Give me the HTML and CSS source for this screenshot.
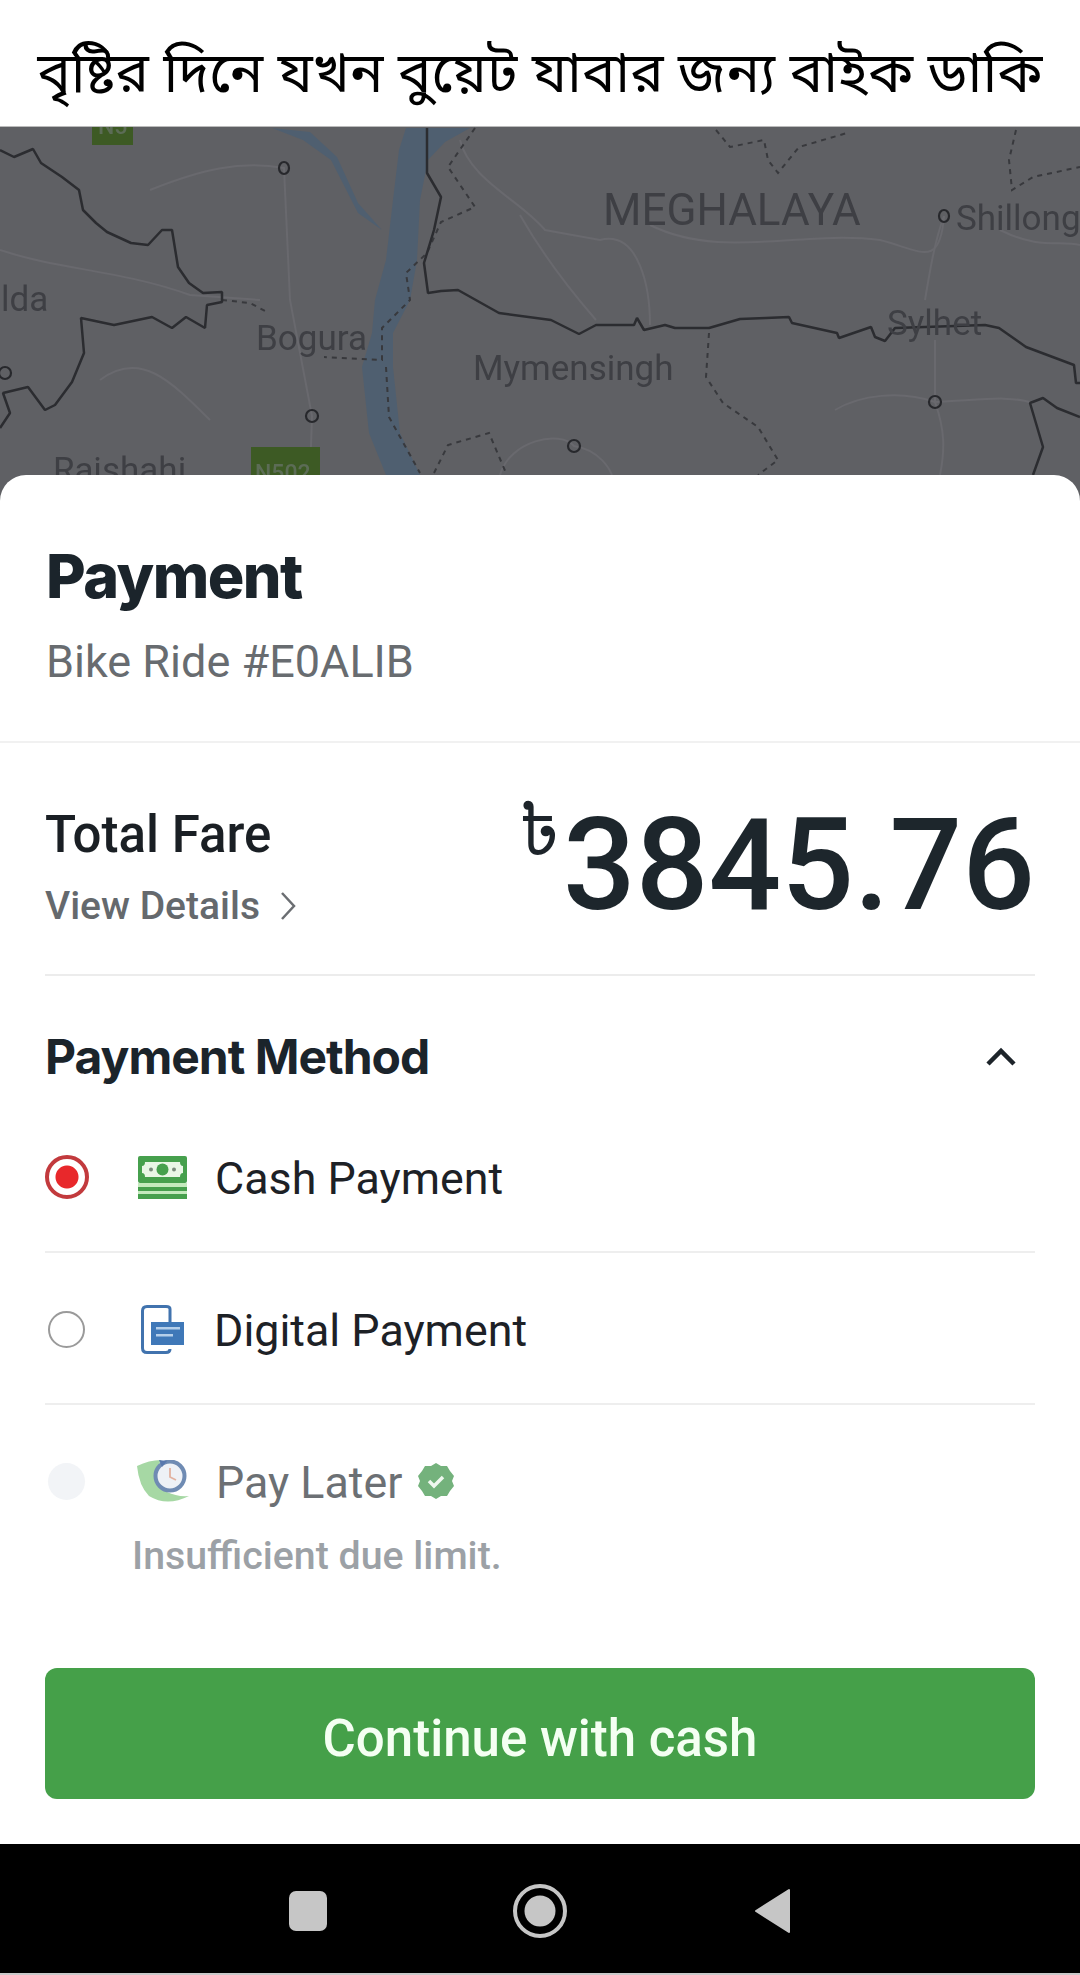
FILE: index.html
```html
<!DOCTYPE html>
<html lang="en">
<head>
<meta charset="utf-8">
<title>Payment</title>
<link rel="stylesheet" href="styles.css">
</head>
<body>
<div class="page">
  <header class="caption"><h1 class="caption-text" lang="bn">বৃষ্টির দিনে যখন বুয়েট যাবার জন্য বাইক ডাকি</h1></header>
  <div class="map-wrap">
    <svg class="map" viewBox="0 127 1080 348" width="1080" height="348" aria-label="Map">
      <rect x="0" y="127" width="1080" height="348" fill="#5f6064"/>
      <g class="roads">
        <path d="M150 190 C200 170 240 160 284 168 L290 300 L312 416 L310 475"/>
        <path d="M0 250 C60 270 120 270 190 295 L260 300"/>
        <path d="M460 140 C470 180 520 200 545 230 L600 240 C640 230 650 290 650 325"/>
        <path d="M520 215 C540 250 570 290 596 320"/>
        <path d="M650 225 C720 260 800 230 880 240 C920 250 940 270 944 216"/>
        <path d="M1000 230 C1040 250 1060 240 1080 245"/>
        <path d="M935 402 C900 390 860 395 835 410 M935 402 C945 430 945 450 940 475"/>
        <path d="M935 340 L935 402 M935 402 C980 400 1010 395 1033 403"/>
        <path d="M925 300 C930 270 935 240 944 216"/>
        <path d="M100 380 C140 350 170 380 210 420"/>
        <path d="M500 475 C510 440 560 430 574 446 C600 450 610 470 612 475"/>
      </g>
      <path class="river" d="M406 128L470 128L445 142L428 160L420 200L417 260L410 300L393 333L393 367L400 433L420 475L386 475L369 433L362 367L372 333L375 300L386 260L393 200L399 150Z"/>
      <path class="river" d="M272 128L310 132L337 157L358 203L382 230L358 213L331 160L303 140Z"/>
      <g class="dashes">
        <path d="M475 128L448 167L475 207L441 222L427 253L406 273L410 300L382 328L382 360L324 357"/>
        <path d="M222 300L250 303L269 313"/>
        <path d="M709 333L706 377L723 403L758 427L778 460L758 475"/>
        <path d="M386 367L389 417L420 473"/>
        <path d="M434 473L448 445L489 433L506 473"/>
        <path d="M716 130L730 147L764 140L768 160L778 173L799 147L847 133"/>
        <path d="M1016 130L1009 160L1012 190L1033 177L1080 167"/>
      </g>
      <g class="borders">
        <path d="M0 150L14 157L33 149L41 163L62 177L79 190L83 210L96 223L107 232L131 243L148 245L162 230L172 230L178 267L189 283L203 293L222 292L222 302L207 305L205 328L186 317L172 328L152 317L114 325L81 318L84 353L72 382L55 405L45 410L28 387L3 393L10 413L0 428"/>
        <path d="M427 128L427 173L441 197L434 230L424 263L428 293L441 291L458 290L499 313L551 320L579 334L596 325L634 325L637 318L644 330L665 325L675 328L709 328L740 319L789 317L792 323L837 333L839 338L871 327L875 337L885 341L895 328L985 325L999 328L1019 342L1026 347L1074 365L1076 383L1080 383"/>
        <path d="M1033 475L1043 447L1030 403L1043 398L1057 408L1080 417"/>
      </g>
      <g class="towns">
        <ellipse cx="284" cy="168" rx="5" ry="6"/>
        <ellipse cx="944" cy="216" rx="5" ry="6"/>
        <ellipse cx="5" cy="373" rx="6" ry="6"/>
        <ellipse cx="312" cy="416" rx="6" ry="6"/>
        <ellipse cx="574" cy="446" rx="6" ry="6"/>
        <ellipse cx="935" cy="402" rx="6" ry="6"/>
      </g>
      <rect class="shield" x="92" y="127" width="41" height="18"/>
      <text class="shield-text" x="98" y="134">N5</text>
      <rect class="shield" x="251" y="447" width="69" height="28"/>
      <text class="shield-text" x="255" y="481">N502</text>
      <text class="label state" x="603" y="225">MEGHALAYA</text>
      <text class="label" x="956" y="230">Shillong</text>
      <text class="label" x="256" y="350">Bogura</text>
      <text class="label" x="473" y="380">Mymensingh</text>
      <text class="label" x="1" y="311">lda</text>
      <text class="label" x="887" y="335">Sylhet</text>
      <text class="label" x="53" y="482">Rajshahi</text>
    </svg>
  </div>
  <main class="sheet">
    <section class="intro">
      <h2 class="title">Payment</h2>
      <p class="ride">Bike Ride #E0ALIB</p>
    </section>
    <section class="fare">
      <div class="fare-left">
        <div class="fare-label">Total Fare</div>
        <div class="fare-link">View Details
          <svg class="chev" viewBox="0 0 16 28" width="16" height="28"><path d="M2 1L14 14L2 27" fill="none" stroke="#6b6e72" stroke-width="2.5"/></svg>
        </div>
      </div>
      <div class="amount"><span class="taka">৳</span><span class="digits">3845.76</span></div>
    </section>
    <section class="methods">
      <div class="method-head">
        <h3 class="method-title">Payment Method</h3>
        <svg viewBox="0 0 32 20" width="32" height="20"><path d="M3 17L16 4L29 17" fill="none" stroke="#1d242a" stroke-width="4.500"/></svg>
      </div>
      <div class="row">
        <span class="radio radio-on"></span>
        <svg class="pay-icon" viewBox="0 0 49 43" width="49" height="43">
          <rect x="0" y="0" width="49" height="27" rx="2" fill="#46a04d"/>
          <path d="M7 6H42Q42 10 45 10V17Q42 17 42 21H7Q7 17 4 17V10Q7 10 7 6Z" fill="#e9f6e6"/>
          <circle cx="24.5" cy="13.5" r="6" fill="#46a04d"/>
          <circle cx="13" cy="13.5" r="2" fill="#7a8b7c"/>
          <circle cx="36" cy="13.5" r="2" fill="#7a8b7c"/>
          <rect x="0" y="27" width="49" height="4" fill="#c4eabd"/>
          <rect x="0" y="31" width="49" height="4" fill="#46a04d"/>
          <rect x="0" y="35" width="49" height="3" fill="#c4eabd"/>
          <rect x="0" y="38" width="49" height="5" fill="#46a04d"/>
        </svg>
        <span class="row-text">Cash Payment</span>
      </div>
      <div class="row">
        <span class="radio"></span>
        <svg class="pay-icon" viewBox="0 0 49 49" width="49" height="49">
          <path d="M33 17V4Q33 1.500 29 1.500H10Q5.500 1.500 5.500 6V43Q5.500 47.500 10 47.500H29Q33 47.500 33 44" fill="none" stroke="#4173ae" stroke-width="3"/>
          <rect x="14" y="17" width="33" height="23" fill="#3f78b8"/>
          <rect x="19" y="22" width="24" height="2.500" fill="#b5cfea"/>
          <rect x="19" y="29" width="17" height="2.500" fill="#b5cfea"/>
        </svg>
        <span class="row-text">Digital Payment</span>
      </div>
      <div class="row row-later">
        <span class="radio radio-off"></span>
        <svg class="pay-icon pay-icon-later" viewBox="0 0 52 42" width="52" height="42">
          <path d="M0 6Q12 0 24 0Q14 20 30 32Q40 37 52 36Q30 47 12 36Q2 26 0 6Z" fill="#a6d8a4"/>
          <circle cx="33" cy="16" r="14.500" fill="#eef1f6" stroke="#6f8bb3" stroke-width="4"/>
          <path d="M33 8V17L39 20" fill="none" stroke="#e2b2a0" stroke-width="1.800"/>
          <path d="M22 0L30 1L25 7Z" fill="#5878ad"/>
        </svg>
        <span class="row-text row-text-later">Pay Later</span>
        <svg class="badge" viewBox="0 0 36 36" width="36" height="36">
          <path d="M18 0L23 3L29 3L32 8L36 13L34 18L36 23L32 28L29 33L23 33L18 36L13 33L7 33L4 28L0 23L2 18L0 13L4 8L7 3L13 3Z" fill="#74b27c"/>
          <path d="M11 18L16 23L25 14" fill="none" stroke="#eef7ee" stroke-width="3.500"/>
        </svg>
      </div>
      <p class="note">Insufficient due limit.</p>
    </section>
    <div class="action"><button class="cta" type="button">Continue with cash</button></div>
  </main>
  <nav class="navbar">
    <span class="nav-square"></span>
    <svg viewBox="0 0 56 56" width="56" height="56"><circle cx="28" cy="28" r="25" fill="none" stroke="#c6c6c6" stroke-width="4"/><circle cx="28" cy="28" r="15.500" fill="#c6c6c6"/></svg>
    <svg viewBox="0 0 38 46" width="38" height="46"><path d="M35 2V44L2 23Z" fill="#c6c6c6" stroke="#c6c6c6" stroke-width="2" stroke-linejoin="round"/></svg>
  </nav>
  <div class="nav-edge"></div>
</div>
</body>
</html>
```
FILE: styles.css
```css
* { box-sizing: border-box; }
html, body { margin: 0; padding: 0; background: #fff; }
body { font-family: Roboto, "Noto Sans", sans-serif; color: #1d242a; }
.page { width: 1080px; height: 1975px; overflow: hidden; background: #5f6064; }

.caption { height: 127px; padding-top: 30px; background: #fff; display: flex; align-items: center; justify-content: center; border-bottom: 1px solid #bbb; }
.caption-text { margin: 0; font-family: "Noto Sans Bengali", "Noto Serif Bengali", "Lohit Bengali", "Noto Sans", "Noto Sans CJK SC", sans-serif; font-size: 56px; font-weight: 400; line-height: 70px; color: #000; white-space: nowrap; }

.map-wrap { height: 348px; }
.map { display: block; filter: blur(.5px); }
.roads path { fill: none; stroke: #69696e; stroke-width: 2; }
.river { fill: #4f5f70; }
.borders path { fill: none; stroke: #2b2c30; stroke-width: 2.500; stroke-linejoin: bevel; }
.dashes path { fill: none; stroke: #38393d; stroke-width: 2; stroke-dasharray: 5 5; }
.towns ellipse { fill: none; stroke: #27282c; stroke-width: 2.200; }
.label { font-family: Roboto, sans-serif; font-size: 35px; fill: #3e3f44; }
.state { font-size: 44px; }
.shield { fill: #3d5a24; }
.shield-text { font-family: Roboto, sans-serif; font-size: 23px; font-weight: 500; fill: #5c6c56; }

.sheet { height: 1369px; background: #fff; border-radius: 26px 26px 0 0; }
.intro { height: 268px; padding: 66px 46px 0; border-bottom: 2px solid #f1f1f1; }
.title { margin: 0; font-family: Inter, sans-serif; font-size: 61px; line-height: 70px; font-weight: 800; color: #1b242b; letter-spacing: -1.500px; }
.ride { margin: 26px 0 0; font-size: 45px; line-height: 50px; color: #686c70; }

.fare { height: 233px; margin: 0 45px; border-bottom: 2px solid #ececec; display: flex; justify-content: space-between; position: relative; }
.fare-left { padding-top: 64px; }
.fare-label { font-size: 51px; line-height: 56px; font-weight: 500; color: #1a1f24; }
.fare-link { display: flex; align-items: center; gap: 20px; margin-top: 21px; font-size: 39px; line-height: 44px; font-weight: 500; color: #65696d; }
.amount { display: flex; align-items: flex-start; padding-top: 47px; }
.taka { font-family: "Noto Sans Bengali", "Noto Sans", sans-serif; font-size: 70px; line-height: 74px; font-weight: 400; margin: 11px 3px 0 0; }
.digits { font-size: 128px; line-height: 150px; font-weight: 500; color: #1d262c; }

.methods { margin: 0 45px; }
.method-head { height: 125px; padding: 36px 18px 0 0; display: flex; align-items: center; justify-content: space-between; }
.method-title { margin: 0; font-family: Inter, sans-serif; font-size: 48px; font-weight: 700; color: #1b242b; letter-spacing: -1px; }
.row { height: 152px; display: flex; align-items: center; border-bottom: 2px solid #eeeeee; padding: 2px 0 0 3px; }
.row-later { border-bottom: 0; height: 150px; }
.radio { width: 37px; height: 37px; border: 2px solid #9a9a9a; border-radius: 50%; flex: none; margin-right: 52px; background: #fff; }
.radio-on { width: 44px; height: 44px; margin: 0 49px 0 -3px; border: 4px solid #c23a3d; background: radial-gradient(circle, #e8282b 0 11px, #fff 12px); }
.radio-off { border: 0; background: #f2f4f7; }
.pay-icon { flex: none; margin-right: 28px; }
.pay-icon-later { margin-right: 27px; }
.row-text { font-size: 44.800px; color: #1d2126; padding-top: 2px; }
.row-text-later { color: #6c7074; }
.badge { margin-left: 16px; }
.note { margin: -21px 0 0 87px; font-size: 39.300px; line-height: 44px; font-weight: 500; color: #9ca1a6; }
.action { margin: 90px 45px 0; }
.cta { display: block; width: 990px; height: 131px; padding: 10px 0 0; border: 0; border-radius: 12px; background: #45a049; color: #f4fff2; font-family: Roboto, sans-serif; font-size: 51px; font-weight: 500; }

.navbar { height: 129px; background: #000; display: flex; align-items: center; justify-content: center; padding-top: 4px; }
.navbar svg:nth-child(2) { margin-left: 185px; }
.navbar svg:nth-child(3) { margin-left: 186px; }
.nav-square { width: 38px; height: 40px; background: #c6c6c6; border-radius: 7px; }
.nav-edge { height: 2px; background: #c9c9c9; }
```
